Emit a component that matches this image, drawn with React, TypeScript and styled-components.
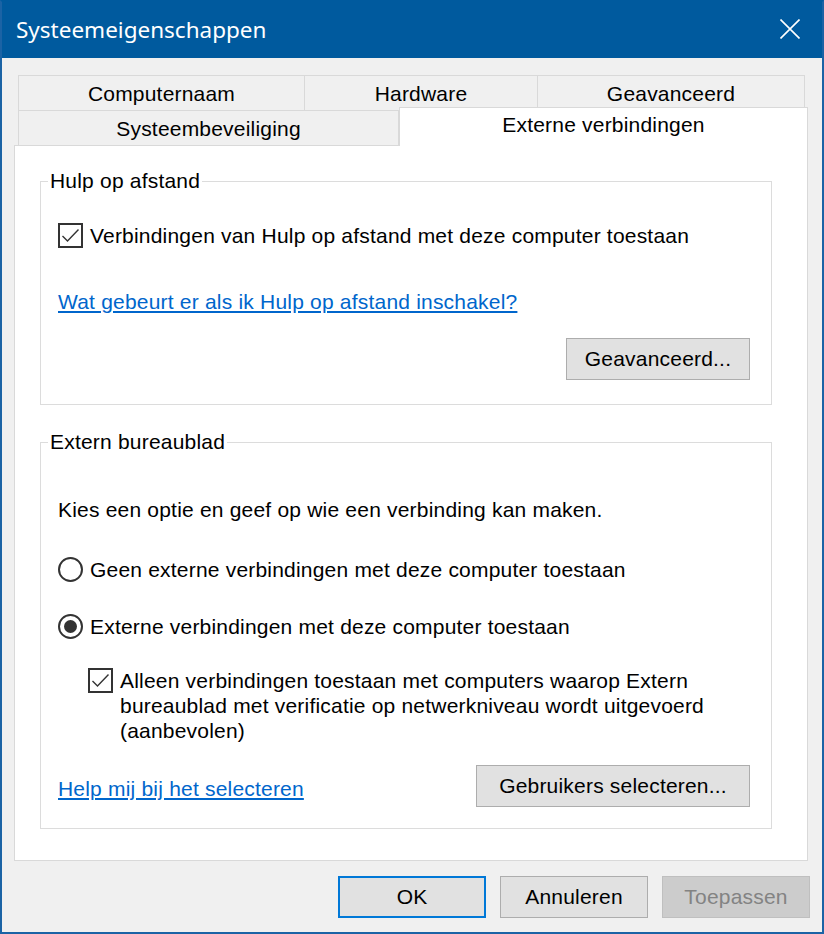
import React from "react";
import styled, { createGlobalStyle } from "styled-components";

const Global = createGlobalStyle`
  html, body { margin: 0; padding: 0; background: #f0f0f0; }
  body { font-family: "Liberation Sans", Arial, sans-serif; letter-spacing: 0.2px; }
  * { box-sizing: border-box; }
`;

const Window = styled.div`
  width: 824px;
  height: 934px;
  display: flex;
  flex-direction: column;
  border: 2px solid #1b63a5;
  border-top-color: #005a9e;
  background: #f0f0f0;
`;

const TitleBar = styled.div`
  height: 56px;
  flex: none;
  background: #005a9e;
  display: flex;
  align-items: center;
  justify-content: space-between;
  padding: 0 22px 0 14px;
`;

const Title = styled.div`
  font-family: "Noto Sans", "Open Sans", sans-serif;
  font-size: 22.5px;
  letter-spacing: 0;
  color: #ffffff;
  margin-top: -2px;
`;

const CloseBtn = styled.div`
  width: 20px;
  height: 20px;
  display: flex;
  margin-top: -2px;
`;

const Body = styled.div`
  flex: 1;
  display: flex;
  flex-direction: column;
  padding: 17px 13px 0 12px;
`;

const TabRow = styled.div`
  display: flex;
  margin-left: 4px;
  height: 35px;
  position: relative;
`;

const Tab = styled.div<{ $w: number; $last?: boolean }>`
  width: ${(p) => p.$w}px;
  height: 35px;
  flex: none;
  border: 1px solid #d9d9d9;
  border-bottom: none;
  margin-right: ${(p) => (p.$last ? 0 : -1)}px;
  display: flex;
  align-items: center;
  justify-content: center;
  padding-top: 1px;
  font-size: 21px;
  color: #000;
  background: #f0f0f0;
`;

const ActiveTab = styled.div<{ $w: number }>`
  width: ${(p) => p.$w}px;
  height: 39px;
  flex: none;
  margin-top: -3px;
  border: 1px solid #d9d9d9;
  border-bottom: none;
  background: #ffffff;
  position: relative;
  z-index: 1;
  display: flex;
  justify-content: center;
  padding-top: 5px;
  font-size: 21px;
  line-height: 24px;
  color: #000;
`;

const Panel = styled.div`
  width: 794px;
  height: 716px;
  flex: none;
  background: #ffffff;
  border: 1px solid #d9d9d9;
  padding: 24px 35px 0 25px;
  display: flex;
  flex-direction: column;
`;

const Group = styled.fieldset<{ $h: number }>`
  margin: 0;
  width: 732px;
  height: ${(p) => p.$h}px;
  border: 1px solid #dcdcdc;
  padding: 0 21px 0 17px;
  display: flex;
  flex-direction: column;
  & + & {
    margin-top: 26px;
  }
`;

const Legend = styled.legend`
  font-size: 21px;
  line-height: 22px;
  padding: 0 2px;
  margin-left: -10px;
  color: #000;
`;

const Row = styled.div<{ $mt: number; $indent?: number }>`
  display: flex;
  align-items: flex-start;
  gap: 7px;
  margin-top: ${(p) => p.$mt}px;
  margin-left: ${(p) => p.$indent ?? 0}px;
  font-size: 21px;
  line-height: 25px;
  color: #000;
`;

const Text = styled.div<{ $mt: number }>`
  margin-top: ${(p) => p.$mt}px;
  font-size: 21px;
  line-height: 25px;
  color: #000;
`;

const Link = styled.a<{ $mt?: number; $pt?: number }>`
  display: block;
  margin-top: ${(p) => p.$mt ?? 0}px;
  padding-top: ${(p) => p.$pt ?? 0}px;
  font-size: 21px;
  line-height: 25px;
  color: #0066cc;
  text-decoration: underline;
  cursor: pointer;
  width: fit-content;
`;

const ButtonRow = styled.div<{ $mt: number; $between?: boolean }>`
  display: flex;
  justify-content: ${(p) => (p.$between ? "space-between" : "flex-end")};
  align-items: center;
  margin-top: ${(p) => p.$mt}px;
`;

const Button = styled.div<{ $w: number; $variant?: "default" | "primary" | "disabled" }>`
  width: ${(p) => p.$w}px;
  height: 42px;
  flex: none;
  display: flex;
  align-items: center;
  justify-content: center;
  font-size: 21px;
  background: ${(p) => (p.$variant === "disabled" ? "#cccccc" : "#e1e1e1")};
  color: ${(p) => (p.$variant === "disabled" ? "#838383" : "#000")};
  border: ${(p) =>
    p.$variant === "primary"
      ? "2px solid #0078d7"
      : p.$variant === "disabled"
      ? "1px solid #bfbfbf"
      : "1px solid #adadad"};
`;

const Footer = styled.div`
  display: flex;
  justify-content: flex-end;
  gap: 14px;
  margin-top: 15px;
  margin-right: -1px;
`;

const Check = () => (
  <svg width="25" height="25" viewBox="0 0 25 25" style={{ flex: "none" }}>
    <rect x="1" y="1" width="23" height="23" fill="#fff" stroke="#333" strokeWidth="2" />
    <polyline points="4.5,13 9.5,18 20.5,6.5" fill="none" stroke="#333" strokeWidth="1.4" />
  </svg>
);

const Radio = ({ checked }: { checked?: boolean }) => (
  <svg width="25" height="25" viewBox="0 0 25 25" style={{ flex: "none" }}>
    <circle cx="12.5" cy="12.5" r="11.5" fill="#fff" stroke="#333" strokeWidth="2" />
    {checked && <circle cx="12.5" cy="12.5" r="6.5" fill="#333" />}
  </svg>
);

export default function App() {
  return (
    <>
      <Global />
      <Window>
        <TitleBar>
          <Title>Systeemeigenschappen</Title>
          <CloseBtn>
            <svg width="20" height="20" viewBox="0 0 20 20">
              <path d="M0.5 0.5 L19.5 19.5 M19.5 0.5 L0.5 19.5" stroke="#fff" strokeWidth="1.6" />
            </svg>
          </CloseBtn>
        </TitleBar>
        <Body>
          <TabRow>
            <Tab $w={287}>Computernaam</Tab>
            <Tab $w={234}>Hardware</Tab>
            <Tab $w={268}>Geavanceerd</Tab>
          </TabRow>
          <TabRow>
            <Tab $w={381} $last>Systeembeveiliging</Tab>
            <ActiveTab $w={409}>Externe verbindingen</ActiveTab>
          </TabRow>
          <Panel>
            <Group $h={235}>
              <Legend>Hulp op afstand</Legend>
              <Row $mt={31}>
                <Check />
                <span>Verbindingen van Hulp op afstand met deze computer toestaan</span>
              </Row>
              <Link $mt={41}>Wat gebeurt er als ik Hulp op afstand inschakel?</Link>
              <ButtonRow $mt={24}>
                <Button $w={184}>Geavanceerd...</Button>
              </ButtonRow>
            </Group>
            <Group $h={398}>
              <Legend>Extern bureaublad</Legend>
              <Text $mt={44}>Kies een optie en geef op wie een verbinding kan maken.</Text>
              <Row $mt={35}>
                <Radio />
                <span>Geen externe verbindingen met deze computer toestaan</span>
              </Row>
              <Row $mt={32}>
                <Radio checked />
                <span>Externe verbindingen met deze computer toestaan</span>
              </Row>
              <Row $mt={29} $indent={30}>
                <Check />
                <span>
                  Alleen verbindingen toestaan met computers waarop Extern
                  <br />
                  bureaublad met verificatie op netwerkniveau wordt uitgevoerd
                  <br />
                  (aanbevolen)
                </span>
              </Row>
              <ButtonRow $mt={22} $between>
                <Link $pt={4}>Help mij bij het selecteren</Link>
                <Button $w={274}>Gebruikers selecteren...</Button>
              </ButtonRow>
            </Group>
          </Panel>
          <Footer>
            <Button $w={148} $variant="primary">OK</Button>
            <Button $w={148}>Annuleren</Button>
            <Button $w={148} $variant="disabled">Toepassen</Button>
          </Footer>
        </Body>
      </Window>
    </>
  );
}
